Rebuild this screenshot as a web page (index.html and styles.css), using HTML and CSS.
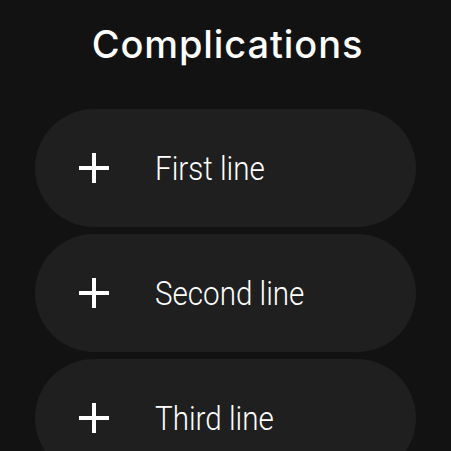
FILE: index.html
```html
<!DOCTYPE html>
<html>
<head>
<meta charset="utf-8">
<link rel="stylesheet" href="styles.css">
</head>
<body>
<div class="screen">
  <h1 class="title">Complications</h1>
  <div class="list">
    <div class="chip">
      <svg class="plus" width="30" height="30" viewBox="0 0 30 30"><path d="M15 0V30M0 15H30" stroke="#fff" stroke-width="4"/></svg>
      <span class="label">First line</span>
    </div>
    <div class="chip">
      <svg class="plus" width="30" height="30" viewBox="0 0 30 30"><path d="M15 0V30M0 15H30" stroke="#fff" stroke-width="4"/></svg>
      <span class="label">Second line</span>
    </div>
    <div class="chip">
      <svg class="plus" width="30" height="30" viewBox="0 0 30 30"><path d="M15 0V30M0 15H30" stroke="#fff" stroke-width="4"/></svg>
      <span class="label">Third line</span>
    </div>
  </div>
</div>
</body>
</html>
```
FILE: styles.css
```css
html, body {
  margin: 0;
  padding: 0;
  background: #121212;
  overflow: hidden;
}
.screen {
  width: 451px;
  height: 451px;
  overflow: hidden;
  display: flex;
  flex-direction: column;
  align-items: center;
}
.title {
  flex-shrink: 0;
  margin: 20px 0 0 0;
  height: 89px;
  font-family: "Inter", sans-serif;
  font-weight: 500;
  font-size: 38px;
  line-height: 48px;
  color: #fff;
  letter-spacing: 0.9px;
  padding-left: 4px;
}
.list {
  flex-shrink: 0;
  display: flex;
  flex-direction: column;
  gap: 7px;
  width: 381px;
}
.chip {
  height: 118px;
  border-radius: 59px;
  background: #1f1f1f;
  display: flex;
  align-items: center;
  padding-left: 44px;
  flex-shrink: 0;
}
.plus {
  display: block;
  flex-shrink: 0;
}
.label {
  margin-left: 46px;
  font-family: "Roboto", sans-serif;
  font-weight: 300;
  font-size: 34px;
  color: #fff;
  display: inline-block;
  transform: scaleX(0.87);
  transform-origin: left center;
  white-space: nowrap;
}
```
